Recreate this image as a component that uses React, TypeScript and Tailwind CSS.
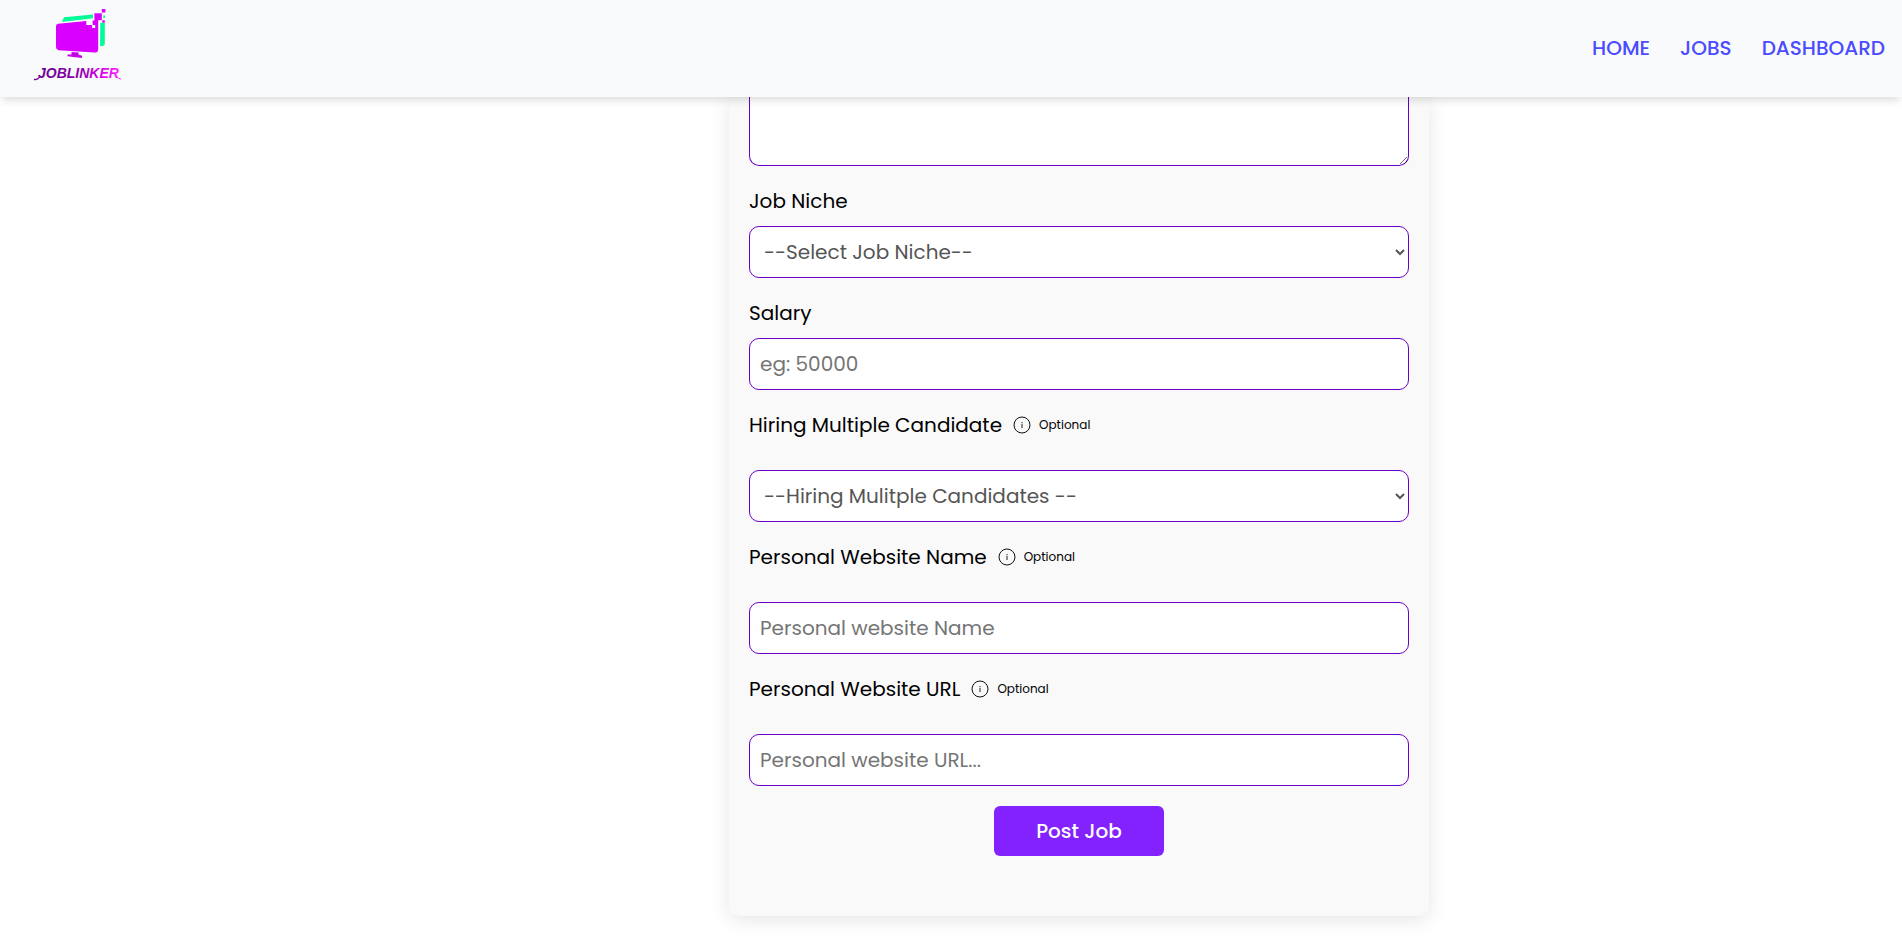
import type { ReactNode } from "react";
import { clsx } from "clsx";

const control =
  "block h-[52px] w-full rounded-[10px] border border-[#6a00c9] bg-white px-[10px] text-xl outline-none placeholder:text-[#757575]";
const inputStyle = clsx(control, "text-black");
const selectStyle = clsx(control, "text-[#555]");

function Logo() {
  return (
    <svg viewBox="0 0 96 80" className="h-20 w-24" role="img" aria-label="Joblinker">
      <defs>
        <linearGradient id="wordmark" x1="0" x2="1" y1="0" y2="0">
          <stop offset="0" stopColor="#6b0091" />
          <stop offset="0.5" stopColor="#8a00a8" />
          <stop offset="0.75" stopColor="#d400e8" />
          <stop offset="1" stopColor="#f92bff" />
        </linearGradient>
      </defs>
      <path d="M34 13.2 L63 10.4 V14.2 L32 17.9 Z" fill="#00fb98" />
      <path d="M70.3 18.8 H74.8 V39.5 Q74.8 41.8 72 42 L70 42.2 Z" fill="#00fb98" />
      <path d="M73.3 11.5 H75 V14 H73.3 Z" fill="#00fb98" />
      <path
        d="M28 19.8 L56.3 17 V21 H62 V24 H65.2 V20.5 H68.2 V45 Q68.2 48.6 65 48.5 L28.5 46.2 Q26 45.8 26 43 V22.5 Q26 20 28 19.8 Z"
        fill="#d900ff"
      />
      <path d="M62.6 16.5 H64.4 V9.2 H71.8 V16.2 H68.2 V21 H62.6 Z" fill="#d900ff" />
      <path d="M71.8 5 H75.4 V8.6 H71.8 Z M72.3 16.3 H74.8 V18.8 H72.3 Z" fill="#d900ff" />
      <path d="M41.5 48 L48.5 48.4 V50.6 L52 51.8 V53.9 L37.5 52.2 V50.5 L41.5 50.4 Z" fill="#c800ea" />
      <text
        x="8"
        y="73.5"
        fill="url(#wordmark)"
        fontFamily="Liberation Sans, sans-serif"
        fontSize="14"
        fontStyle="italic"
        fontWeight="700"
      >
        JOBLINKER
      </text>
      <path d="M4 75.5 Q8 76 10 72" fill="none" stroke="#76009a" strokeWidth="1.4" />
      <path d="M87 72.5 Q88 75 91 75" fill="none" stroke="#f92bff" strokeWidth="1" />
    </svg>
  );
}

function InfoIcon() {
  return (
    <svg viewBox="0 0 18 18" className="size-[18px]" aria-hidden="true">
      <circle cx="9" cy="9" r="8" fill="none" stroke="#111" strokeWidth="1" />
      <path d="M9 8 V12 M9 6 V7.2" stroke="#444" strokeWidth="1.2" />
    </svg>
  );
}

function Field({
  id,
  label,
  optional = false,
  children,
}: {
  id: string;
  label: string;
  optional?: boolean;
  children: ReactNode;
}) {
  return (
    <div className={clsx("flex flex-col", optional ? "gap-[30px]" : "gap-[10px]")}>
      <div className="flex h-[30px] items-center">
        <label htmlFor={id} className="text-xl leading-[30px] text-black">
          {label}
        </label>
        {optional && (
          <span className="ml-[11px] flex items-center gap-2 text-xs text-black">
            <InfoIcon />
            Optional
          </span>
        )}
      </div>
      {children}
    </div>
  );
}

export default function App() {
  return (
    <div className="bg-white font-[Poppins,Inter,sans-serif]">
      <header className="relative z-10 flex h-[97px] items-center justify-between bg-[#f9fafc] pr-[17px] pb-[2px] pl-[30px] shadow-[0_5px_8px_-2px_rgba(0,0,0,0.14)]">
        <a href="#home" className="-mt-2">
          <Logo />
        </a>
        <nav className="flex gap-[30px] text-xl font-medium text-[#4b4bff]">
          <a href="#home">HOME</a>
          <a href="#jobs">JOBS</a>
          <a href="#dashboard">DASHBOARD</a>
        </nav>
      </header>

      <main className="pb-6 pl-64">
        <form className="mx-auto flex max-w-[700px] flex-col gap-5 rounded-b-[10px] bg-[#f9f9f9] px-5 pb-[60px] shadow-[0_4px_20px_rgba(0,0,0,0.1)]">
          <textarea
            aria-label="Job description"
            className="block h-[69px] w-full resize-y rounded-b-[10px] border border-t-0 border-[#6a00c9] bg-white px-[10px] text-xl outline-none"
          />
          <Field id="niche" label="Job Niche">
            <select id="niche" className={selectStyle}>
              <option>--Select Job Niche--</option>
            </select>
          </Field>
          <Field id="salary" label="Salary">
            <input id="salary" type="text" placeholder="eg: 50000" className={inputStyle} />
          </Field>
          <Field id="multiple" label="Hiring Multiple Candidate" optional>
            <select id="multiple" className={selectStyle}>
              <option>--Hiring Mulitple Candidates --</option>
            </select>
          </Field>
          <Field id="site-name" label="Personal Website Name" optional>
            <input id="site-name" type="text" placeholder="Personal website Name" className={inputStyle} />
          </Field>
          <Field id="site-url" label="Personal Website URL" optional>
            <input id="site-url" type="text" placeholder="Personal website URL..." className={inputStyle} />
          </Field>
          <button
            type="button"
            className="h-[50px] w-[170px] self-center rounded-md bg-[#8322ff] text-xl font-medium text-white"
          >
            Post Job
          </button>
        </form>
      </main>
    </div>
  );
}
